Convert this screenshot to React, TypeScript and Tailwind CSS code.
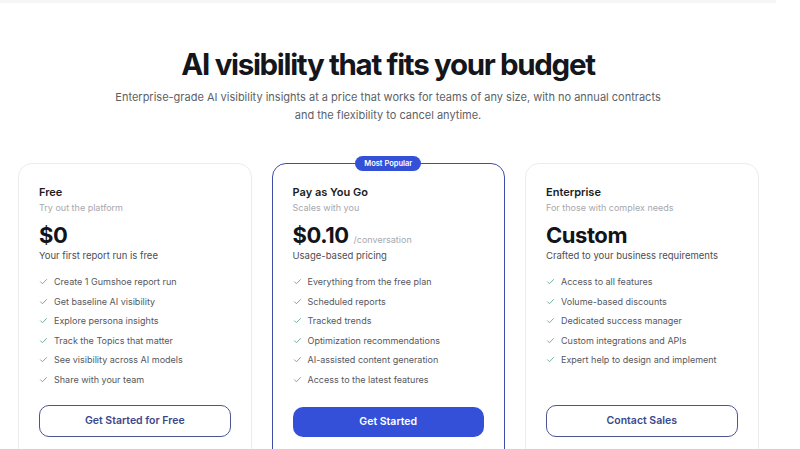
import React from 'react';

const PLANS=[
  {name:'Free',sub:'Try out the platform',price:'$0',unit:'',desc:'Your first report run is free',cta:'Get Started for Free',popular:false,
    feats:['Create 1 Gumshoe report run','Get baseline AI visibility','Explore persona insights','Track the Topics that matter','See visibility across AI models','Share with your team']},
  {name:'Pay as You Go',sub:'Scales with you',price:'$0.10',unit:'/conversation',desc:'Usage-based pricing',cta:'Get Started',popular:true,
    feats:['Everything from the free plan','Scheduled reports','Tracked trends','Optimization recommendations','AI-assisted content generation','Access to the latest features']},
  {name:'Enterprise',sub:'For those with complex needs',price:'Custom',unit:'',desc:'Crafted to your business requirements',cta:'Contact Sales',popular:false,
    feats:['Access to all features','Volume-based discounts','Dedicated success manager','Custom integrations and APIs','Expert help to design and implement']},
];

function Check(){
  return <svg width="9" height="9" viewBox="0 0 12 12" fill="none" className="shrink-0"><path d="M2 6.4l2.6 2.6L10 3.4" stroke="#6fae93" strokeWidth="1.3" strokeLinecap="round" strokeLinejoin="round"/></svg>;
}

export default function App(){
  return (
    <div className="w-[776px] h-[449px] overflow-hidden bg-white text-[#16181d]" style={{fontFamily:'Inter, "Noto Sans", sans-serif'}}>
      <div className="h-[3px] bg-[#f6f6f7]"/>
      <div className="pt-[43px] text-center">
        <h1 className="text-[29.5px] leading-[36px] font-bold tracking-[-0.045em] text-[#14161c]">AI visibility that fits your budget</h1>
        <p className="mt-[6px] text-[11px] leading-[18px] text-[#5d5f67] w-[556px] mx-auto">Enterprise-grade AI visibility insights at a price that works for teams of any size, with no annual contracts and the flexibility to cancel anytime.</p>
      </div>
      <div className="mt-[39px] pl-[18px] flex gap-5 items-start">
        {PLANS.map(p=>(
          <div key={p.name} className={`relative w-[233.5px] h-[300px] rounded-[14px] bg-white flex flex-col px-5 pt-5 ${p.popular?'border-[1.5px] border-[#3f4da6]':'border border-[#ececef]'}`}>
            {p.popular&&<div className="absolute -top-[8px] left-1/2 -translate-x-1/2 h-[15px] px-[9px] rounded-full bg-[#3450d6] text-white text-[7.5px] font-semibold flex items-center">Most Popular</div>}
            <div className="text-[11px] leading-4 font-semibold text-[#1a1c22]">{p.name}</div>
            <div className="text-[9px] leading-4 text-[#a7a8ad]">{p.sub}</div>
            <div className="mt-[6px] h-[26px] flex items-baseline gap-[5px] leading-[26px]">
              <span className="text-[22px] font-bold tracking-[-0.02em] text-[#12141a]">{p.price}</span>
              {p.unit&&<span className="text-[9px] leading-[26px] text-[#a7a8ad]">{p.unit}</span>}
            </div>
            <div className="text-[9.5px] leading-4 text-[#4c4e55]">{p.desc}</div>
            <ul className="mt-2 h-[117px]">
              {p.feats.map(f=>(
                <li key={f} className="h-[19.5px] flex items-center gap-[6px] text-[9px] text-[#55575e]"><Check/>{f}</li>
              ))}
            </ul>
            <button className={`mt-4 w-full rounded-[10px] text-[10.5px] font-semibold ${p.popular?'h-[30px] mt-[18px] bg-[#3450d8] text-white':'h-[32px] border-[1.5px] border-[#4b5592] text-[#3b478c] bg-white'}`}>{p.cta}</button>
          </div>
        ))}
      </div>
    </div>
  );
}
